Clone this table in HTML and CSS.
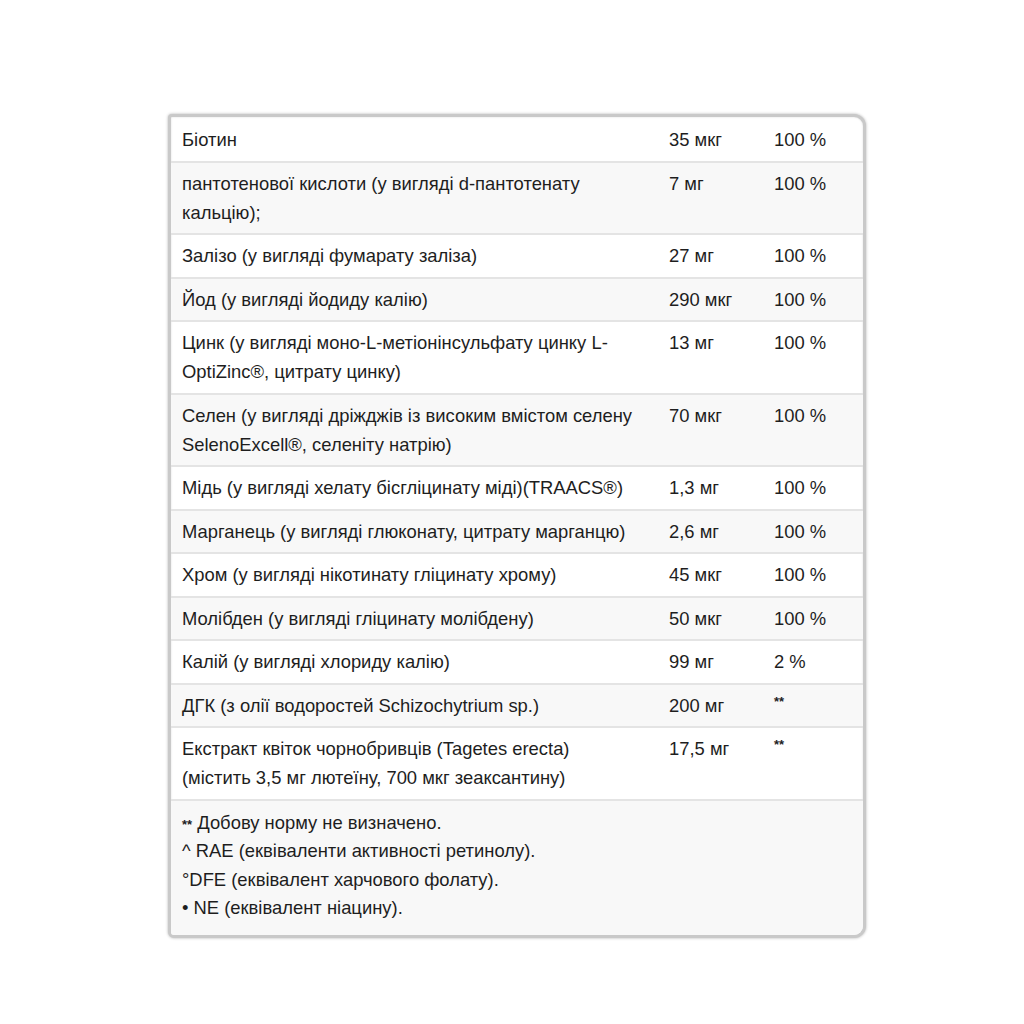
FILE: index.html
```html
<html>
    <head>
        <meta charset="UTF-8">
        <link rel="stylesheet" href="styles.css">
    </head>
    <body>
        <div class="card">
            <table class="facts">
                <tr><td>Біотин</td><td>35 мкг</td><td>100 %</td></tr>
                <tr><td>пантотенової кислоти (у вигляді d-пантотенату кальцію);</td><td>7 мг</td><td>100 %</td></tr>
                <tr><td>Залізо (у вигляді фумарату заліза)</td><td>27 мг</td><td>100 %</td></tr>
                <tr><td>Йод (у вигляді йодиду калію)</td><td>290 мкг</td><td>100 %</td></tr>
                <tr><td>Цинк (у вигляді моно-L-метіонінсульфату цинку L-OptiZinc®, цитрату цинку)</td><td>13 мг</td><td>100 %</td></tr>
                <tr><td>Селен (у вигляді дріжджів із високим вмістом селену SelenoExcell®, селеніту натрію)</td><td>70 мкг</td><td>100 %</td></tr>
                <tr><td>Мідь (у вигляді хелату бісгліцинату міді)(TRAACS®)</td><td>1,3 мг</td><td>100 %</td></tr>
                <tr><td>Марганець (у вигляді глюконату, цитрату марганцю)</td><td>2,6 мг</td><td>100 %</td></tr>
                <tr><td>Хром (у вигляді нікотинату гліцинату хрому)</td><td>45 мкг</td><td>100 %</td></tr>
                <tr><td>Молібден (у вигляді гліцинату молібдену)</td><td>50 мкг</td><td>100 %</td></tr>
                <tr><td>Калій (у вигляді хлориду калію)</td><td>99 мг</td><td>2 %</td></tr>
                <tr><td>ДГК (з олії водоростей Schizochytrium sp.)</td><td>200 мг</td><td><span class="star">**</span></td></tr>
                <tr><td>Екстракт квіток чорнобривців (Tagetes erecta) (містить 3,5 мг лютеїну, 700 мкг зеаксантину)</td><td>17,5 мг</td><td><span class="star">**</span></td></tr>
                <tr class="notes">
                    <td colspan="3">
                        <p><span class="star">**</span> Добову норму не визначено.</p>
                        <p>^ RAE (еквіваленти активності ретинолу).</p>
                        <p>°DFE (еквівалент харчового фолату).</p>
                        <p>• NE (еквівалент ніацину).</p>
                    </td>
                </tr>
            </table>
        </div>
    </body>
</html>
```

FILE: styles.css
```css
body {
    margin: 0;
    background: #fff;
    font-family: "Liberation Sans", Arial, sans-serif;
    color: #1e1e1e;
}

.card {
    width: 692px;
    margin: 114px 0 0 168px;
    border: 3px solid #c9c9c9;
    border-radius: 4px 12px 12px 6px;
    box-shadow: 0 0 3px rgba(0, 0, 0, 0.3), inset 0 0 2px rgba(0, 0, 0, 0.15);
    overflow: hidden;
    background: #fff;
}

.facts {
    width: 100%;
    border-collapse: collapse;
    font-size: 18.4px;
}

.facts td {
    vertical-align: top;
    padding: 6px 10px 6.5px 10px;
    line-height: 29px;
    border-top: 2px solid #e4e4e4;
}

.facts tr:first-child td {
    border-top: none;
    padding-top: 8px;
}

.facts td:nth-child(1) {
    width: 457px;
    padding-left: 11px;
    padding-right: 20px;
}

.facts td:nth-child(2) {
    width: 85px;
}

.facts tr:nth-child(even) {
    background: #f8f8f8;
}

.star {
    font-size: 13px;
    font-weight: bold;
    vertical-align: top;
    line-height: 22px;
}

.notes {
    background: #f8f8f8;
}

.notes td {
    padding: 8px 10px 12px 11px;
}

.notes p {
    margin: 0;
    line-height: 28.5px;
}

.notes .star {
    vertical-align: baseline;
    line-height: 1;
}
```
